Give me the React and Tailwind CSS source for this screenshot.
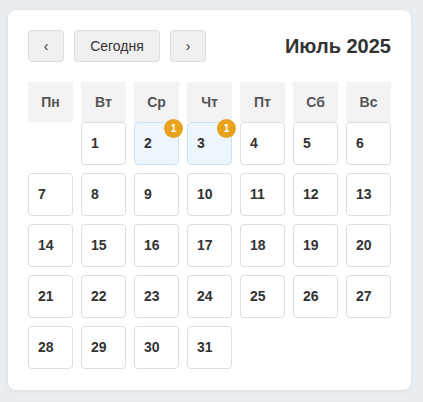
const WEEKDAYS = ["Пн", "Вт", "Ср", "Чт", "Пт", "Сб", "Вс"];

// July 2025 starts on Tuesday
const OFFSET = 1;
const DAYS = 31;
const EVENTS = { 2: 1, 3: 1 };

function DayCell({ day }) {
  const count = EVENTS[day];
  return (
    <div
      className={`relative h-[43px] rounded border px-[9px] pt-[10px] text-sm font-bold leading-5 text-[#333] ${
        count ? "border-[#cfe2f3] bg-[#eef6fd]" : "border-[#ddd] bg-white"
      }`}
    >
      {day}
      {count && (
        <span className="absolute -right-[5px] -top-[4px] flex h-[19px] w-[19px] items-center justify-center rounded-full bg-[#e8a21c] text-[10px] font-bold leading-none text-white">
          {count}
        </span>
      )}
    </div>
  );
}

export default function App() {
  const cells = [];
  for (let i = 0; i < OFFSET; i++) cells.push(null);
  for (let d = 1; d <= DAYS; d++) cells.push(d);

  return (
    <div
      className="min-h-[402px] bg-[#e9eef2] pl-2 pr-3 pt-2.5 pb-3"
      style={{ fontFamily: '"Liberation Sans", Arial, sans-serif' }}
    >
      <div className="w-[403px] rounded-lg bg-white px-5 pt-5 pb-[21px] shadow-[0_1px_4px_rgba(0,0,0,0.08)]">
        <div className="flex h-8 items-center">
          <div className="flex gap-2.5">
            <button className="h-8 w-9 rounded border border-[#ddd] bg-[#f0f0f0] text-sm text-[#333]">
              ‹
            </button>
            <button className="h-8 w-[86px] rounded border border-[#ddd] bg-[#f0f0f0] text-sm text-[#333]">
              Сегодня
            </button>
            <button className="h-8 w-9 rounded border border-[#ddd] bg-[#f0f0f0] text-sm text-[#333]">
              ›
            </button>
          </div>
          <h2 className="ml-auto text-[20px] font-bold text-[#333]">Июль 2025</h2>
        </div>

        <div className="mt-5 grid grid-cols-7 gap-x-2">
          {WEEKDAYS.map((w) => (
            <div
              key={w}
              className="flex h-10 items-center justify-center bg-[#f3f3f3] text-sm font-bold text-[#555]"
            >
              {w}
            </div>
          ))}
        </div>

        <div className="grid grid-cols-7 gap-2">
          {cells.map((d, i) =>
            d ? <DayCell key={i} day={d} /> : <div key={i} className="h-[43px]" />
          )}
        </div>
      </div>
    </div>
  );
}
